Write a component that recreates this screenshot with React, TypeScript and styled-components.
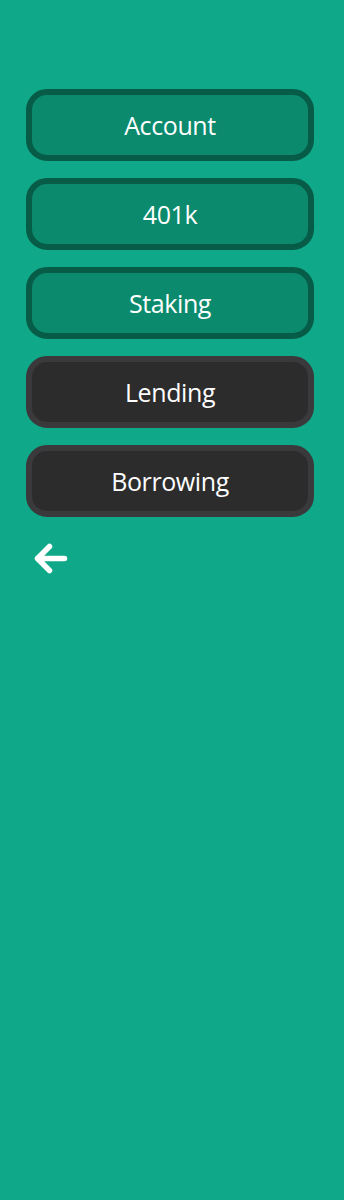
import React from "react";
import styled, { createGlobalStyle } from "styled-components";

const GlobalStyle = createGlobalStyle`
    html, body {
        margin: 0;
        padding: 0;
        background-color: #0fa888;
    }
    body {
        font-family: "Open Sans", "Noto Sans", sans-serif;
    }
`;

const Page = styled.div`
    min-height: 1200px;
    background-color: #0fa888;
    padding: 89px 30px 0 26px;
    box-sizing: border-box;
`;

const Menu = styled.nav`
    display: flex;
    flex-direction: column;
    gap: 17px;
    width: 288px;
`;

const MenuButton = styled.button<{ $dark?: boolean }>`
    height: 72px;
    width: 100%;
    box-sizing: border-box;
    border-radius: 21px;
    border: 6px solid ${(p) => (p.$dark ? "#3a393b" : "#075c48")};
    background-color: ${(p) => (p.$dark ? "#2d2c2d" : "#0b8a6d")};
    color: #ffffff;
    font-family: "Open Sans", "Noto Sans", sans-serif;
    font-size: 25px;
    letter-spacing: -0.4px;
    display: flex;
    align-items: center;
    justify-content: center;
    cursor: pointer;
    padding: 0;
`;

const BackButton = styled.button`
    margin-top: 25px;
    margin-left: 8px;
    width: 36px;
    height: 32px;
    padding: 0;
    border: none;
    background: transparent;
    display: flex;
    align-items: center;
    cursor: pointer;
`;

const items = [
    { label: "Account", dark: false },
    { label: "401k", dark: false },
    { label: "Staking", dark: false },
    { label: "Lending", dark: true },
    { label: "Borrowing", dark: true },
];

const App: React.FC = () => {
    return (
        <>
            <GlobalStyle />
            <Page>
                <Menu>
                    {items.map((item) => (
                        <MenuButton key={item.label} $dark={item.dark}>
                            {item.label}
                        </MenuButton>
                    ))}
                </Menu>
                <BackButton aria-label="Back">
                    <svg width="34" height="31" viewBox="0 0 34 31" fill="none">
                        <path
                            d="M3.5 15.5H30.5M15.5 3.5L3.5 15.5L15.5 27.5"
                            stroke="#ffffff"
                            strokeWidth="5.5"
                            strokeLinecap="round"
                            strokeLinejoin="round"
                        />
                    </svg>
                </BackButton>
            </Page>
        </>
    );
};

export default App;
